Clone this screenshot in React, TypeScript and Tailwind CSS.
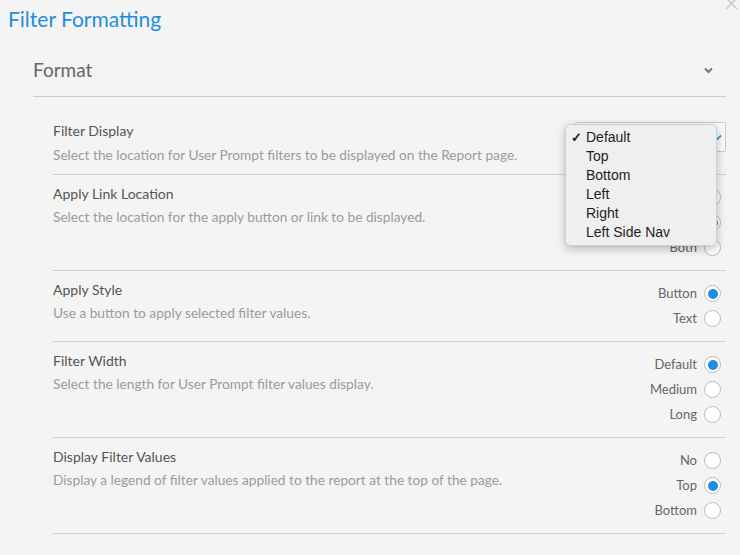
import React from "react";

type Opt = { label: string; checked?: boolean };

function Radio({ label, checked }: Opt) {
  return (
    <div className="flex h-[25px] items-center justify-end gap-[7px]">
      <span className="text-[13px] text-[#666]">{label}</span>
      <span className="flex h-[17px] w-[17px] items-center justify-center rounded-full border border-[#b9b9b9] bg-white">
        {checked ? <span className="h-[10px] w-[10px] rounded-full bg-[#1b8fe0]" /> : null}
      </span>
    </div>
  );
}

function Row({
  title,
  desc,
  options,
  h,
}: {
  title: string;
  desc: string;
  options: Opt[];
  h: string;
}) {
  return (
    <div className={`flex justify-between border-b border-[#d0d0d0] pt-[9px] pr-[5px] ${h}`}>
      <div>
        <div className="h-[20px] text-[14px] leading-[20px] text-[#555]">{title}</div>
        <div className="mt-[3px] text-[13.7px] leading-[20px] text-[#9b9b9b]">{desc}</div>
      </div>
      <div className="flex flex-col pt-[1px]">
        {options.map((o) => (
          <Radio key={o.label} {...o} />
        ))}
      </div>
    </div>
  );
}

const menuItems = ["Default", "Top", "Bottom", "Left", "Right", "Left Side Nav"];

export default function App() {
  return (
    <div
      className="relative h-[555px] w-[740px] overflow-hidden bg-[#f4f4f4]"
      style={{ fontFamily: "Lato, 'Open Sans', sans-serif" }}
    >
      <svg className="absolute right-[2px] top-[-3px]" width="13" height="13" viewBox="0 0 13 13">
        <path d="M1 1L12 12M12 1L1 12" stroke="#c4c4c4" strokeWidth="1.2" />
      </svg>
      <div className="h-[44px] pl-[8px] pt-[5px] text-[21px] leading-[28px] text-[#1e8fd8]">
        Filter Formatting
      </div>
      <div className="ml-[33px] mr-[14px]">
        <div className="flex h-[53px] items-center justify-between border-b border-[#cccccc] pr-[13px]">
          <span className="text-[19px] text-[#666]">Format</span>
          <svg width="9" height="7" viewBox="0 0 9 7">
            <path d="M1 1.5L4.5 5L8 1.5" fill="none" stroke="#777" strokeWidth="2" />
          </svg>
        </div>
        <div className="ml-[20px] pt-[24px]">
          <div className="flex h-[54px] justify-between border-b border-[#d0d0d0]">
            <div>
              <div className="h-[20px] text-[14px] leading-[20px] text-[#555]">Filter Display</div>
              <div className="mt-[4px] text-[13.7px] leading-[20px] text-[#9b9b9b]">
                Select the location for User Prompt filters to be displayed on the Report page.
              </div>
            </div>
            <div className="relative mt-[1px] h-[30px] w-[151px] rounded-[2px] border border-[#c9c9c9] bg-[#fafafa]">
              <svg className="absolute right-[3px] top-[11px]" width="9" height="7" viewBox="0 0 9 7">
                <path d="M1 1.5L4.5 5L8 1.5" fill="none" stroke="#3a9ad9" strokeWidth="1.8" />
              </svg>
              <div
                className="absolute left-[-11px] top-[1px] z-10 w-[152px] rounded-[5px] border border-[#cfcfcf] bg-[#efefef] py-[3px] shadow-[0_3px_10px_rgba(0,0,0,0.25)]"
                style={{ fontFamily: "'Liberation Sans', Arial, sans-serif" }}
              >
                {menuItems.map((m, i) => (
                  <div key={m} className="relative h-[19px] pl-[20px] text-[14px] leading-[19px] text-[#1e1e1e]">
                    {i === 0 ? (
                      <span className="absolute left-[5px] top-0 text-[13px] font-bold">✓</span>
                    ) : null}
                    {m}
                  </div>
                ))}
              </div>
            </div>
          </div>
          <Row
            h="h-[96px]"
            title="Apply Link Location"
            desc="Select the location for the apply button or link to be displayed."
            options={[{ label: "Top" }, { label: "Bottom", checked: true }, { label: "Both" }]}
          />
          <Row
            h="h-[71px]"
            title="Apply Style"
            desc="Use a button to apply selected filter values."
            options={[{ label: "Button", checked: true }, { label: "Text" }]}
          />
          <Row
            h="h-[96px]"
            title="Filter Width"
            desc="Select the length for User Prompt filter values display."
            options={[{ label: "Default", checked: true }, { label: "Medium" }, { label: "Long" }]}
          />
          <Row
            h="h-[96px]"
            title="Display Filter Values"
            desc="Display a legend of filter values applied to the report at the top of the page."
            options={[{ label: "No" }, { label: "Top", checked: true }, { label: "Bottom" }]}
          />
        </div>
      </div>
    </div>
  );
}
